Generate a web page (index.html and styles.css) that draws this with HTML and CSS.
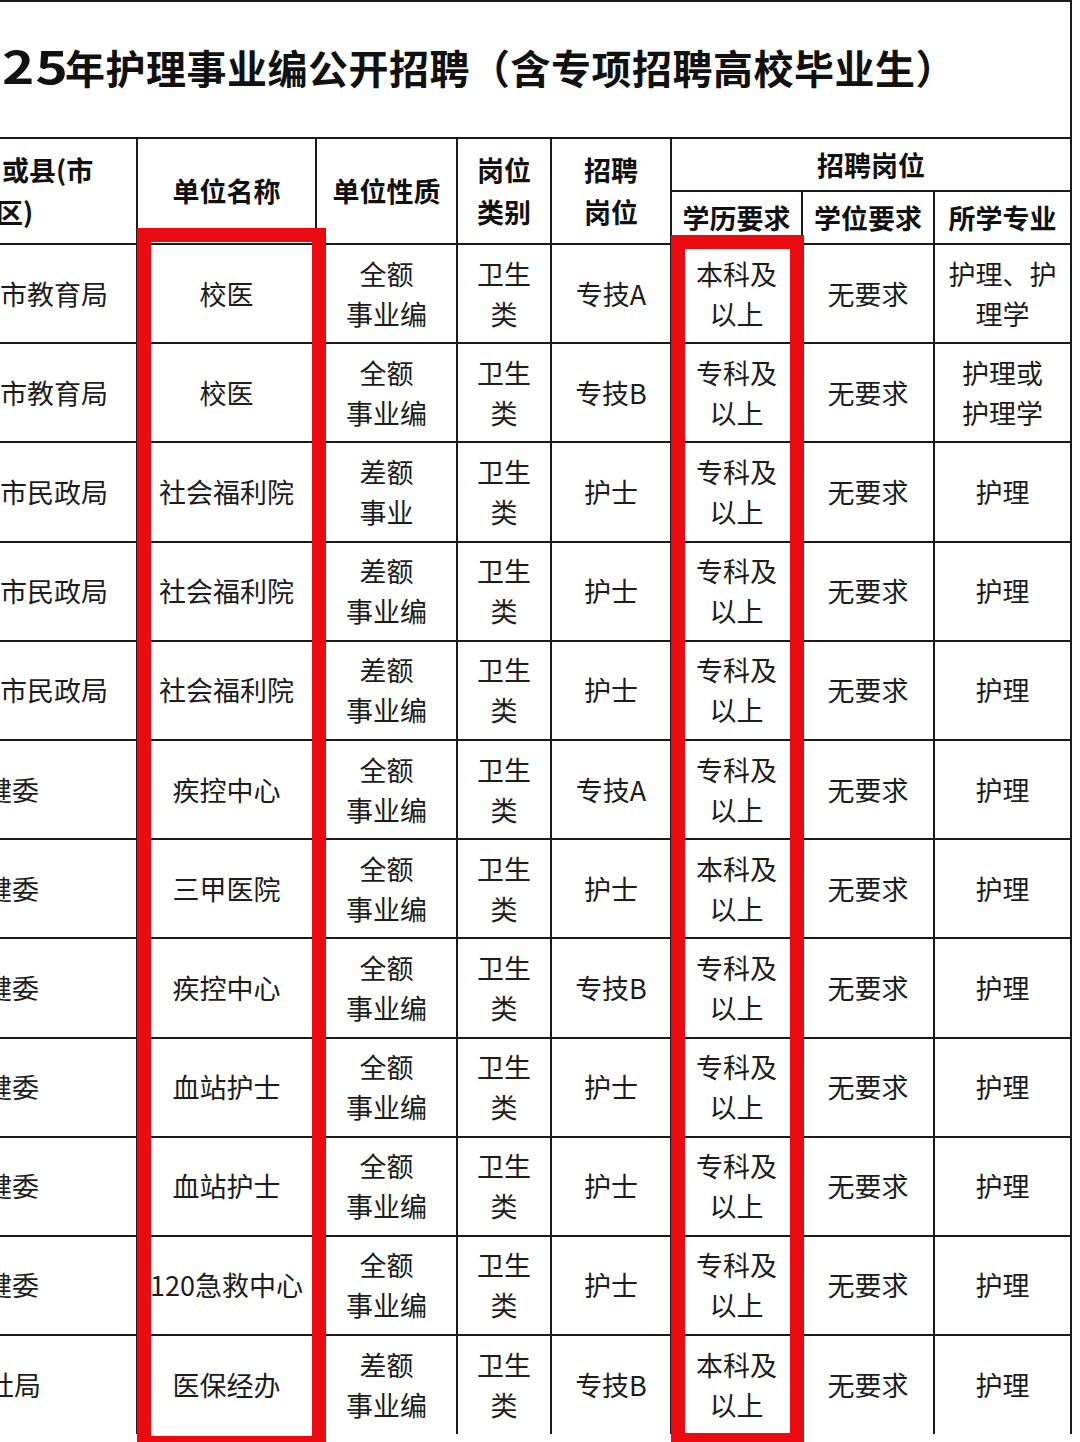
FILE: index.html
```html
<!DOCTYPE html>
<html lang="zh-CN">
<head>
<meta charset="utf-8">
<title>护理事业编公开招聘</title>
<link rel="stylesheet" href="styles.css">
</head>
<body>
<div class="page">
  <table class="sheet">
    <colgroup>
      <col class="w0"><col class="w1"><col class="w2"><col class="w3"><col class="w4"><col class="w5"><col class="w6"><col class="w7">
    </colgroup>
    <tr class="title-row">
      <td class="title" colspan="8"><span class="yr">25</span>年护理事业编公开招聘（含专项招聘高校毕业生）</td>
    </tr>
    <tr class="head-row">
      <th class="c0 h0" rowspan="2"><div class="l1">或县(市</div><div class="l2">区)</div></th>
      <th rowspan="2">单位名称</th>
      <th rowspan="2">单位性质</th>
      <th rowspan="2" class="two">岗位<br>类别</th>
      <th rowspan="2" class="two">招聘<br>岗位</th>
      <th colspan="3" class="top">招聘岗位</th>
    </tr>
    <tr class="head-row">
      <th class="sub">学历要求</th>
      <th class="sub">学位要求</th>
      <th class="sub">所学专业</th>
    </tr>
    <tr class="row">
      <td class="c0"><span>市教育局</span></td><td>校医</td><td>全额<br>事业编</td><td>卫生<br>类</td><td>专技A</td><td>本科及<br>以上</td><td>无要求</td><td>护理、护<br>理学</td>
    </tr>
    <tr class="row">
      <td class="c0"><span>市教育局</span></td><td>校医</td><td>全额<br>事业编</td><td>卫生<br>类</td><td>专技B</td><td>专科及<br>以上</td><td>无要求</td><td>护理或<br>护理学</td>
    </tr>
    <tr class="row">
      <td class="c0"><span>市民政局</span></td><td>社会福利院</td><td>差额<br>事业</td><td>卫生<br>类</td><td>护士</td><td>专科及<br>以上</td><td>无要求</td><td>护理</td>
    </tr>
    <tr class="row">
      <td class="c0"><span>市民政局</span></td><td>社会福利院</td><td>差额<br>事业编</td><td>卫生<br>类</td><td>护士</td><td>专科及<br>以上</td><td>无要求</td><td>护理</td>
    </tr>
    <tr class="row">
      <td class="c0"><span>市民政局</span></td><td>社会福利院</td><td>差额<br>事业编</td><td>卫生<br>类</td><td>护士</td><td>专科及<br>以上</td><td>无要求</td><td>护理</td>
    </tr>
    <tr class="row">
      <td class="c0"><span class="cut-wj">卫健委</span></td><td>疾控中心</td><td>全额<br>事业编</td><td>卫生<br>类</td><td>专技A</td><td>专科及<br>以上</td><td>无要求</td><td>护理</td>
    </tr>
    <tr class="row">
      <td class="c0"><span class="cut-wj">卫健委</span></td><td>三甲医院</td><td>全额<br>事业编</td><td>卫生<br>类</td><td>护士</td><td>本科及<br>以上</td><td>无要求</td><td>护理</td>
    </tr>
    <tr class="row">
      <td class="c0"><span class="cut-wj">卫健委</span></td><td>疾控中心</td><td>全额<br>事业编</td><td>卫生<br>类</td><td>专技B</td><td>专科及<br>以上</td><td>无要求</td><td>护理</td>
    </tr>
    <tr class="row">
      <td class="c0"><span class="cut-wj">卫健委</span></td><td>血站护士</td><td>全额<br>事业编</td><td>卫生<br>类</td><td>护士</td><td>专科及<br>以上</td><td>无要求</td><td>护理</td>
    </tr>
    <tr class="row">
      <td class="c0"><span class="cut-wj">卫健委</span></td><td>血站护士</td><td>全额<br>事业编</td><td>卫生<br>类</td><td>护士</td><td>专科及<br>以上</td><td>无要求</td><td>护理</td>
    </tr>
    <tr class="row">
      <td class="c0"><span class="cut-wj">卫健委</span></td><td>120急救中心</td><td>全额<br>事业编</td><td>卫生<br>类</td><td>护士</td><td>专科及<br>以上</td><td>无要求</td><td>护理</td>
    </tr>
    <tr class="row last">
      <td class="c0"><span class="cut-rs">人社局</span></td><td>医保经办</td><td>差额<br>事业编</td><td>卫生<br>类</td><td>专技B</td><td>本科及<br>以上</td><td>无要求</td><td>护理</td>
    </tr>
  </table>
  <div class="mark mark-unit"></div>
  <div class="mark mark-edu"></div>
</div>
</body>
</html>
```
FILE: styles.css
```css
html, body {
  margin: 0;
  padding: 0;
  background: #ffffff;
}
body {
  width: 1080px;
  height: 1442px;
  overflow: hidden;
  font-family: "Noto Sans CJK SC", "Noto Sans", sans-serif;
  color: #1c1c1c;
}
.page {
  position: relative;
  width: 1080px;
  height: 1442px;
}
.sheet {
  table-layout: fixed;
  border-collapse: collapse;
  width: 1071px;
}
.w0 { width: 137px; }
.w1 { width: 179px; }
.w2 { width: 141px; }
.w3 { width: 94px; }
.w4 { width: 120px; }
.w5 { width: 131px; }
.w6 { width: 132px; }
.w7 { width: 137px; }

.sheet td, .sheet th {
  border: 2px solid #1a1a1a;
  padding: 0;
  text-align: center;
  vertical-align: middle;
  font-size: 27px;
  line-height: 40px;
  white-space: nowrap;
}
.sheet th {
  font-weight: 700;
  color: #111;
}
.sheet td {
  font-weight: 400;
}
.title-row { height: 137px; }
.sheet td.title {
  border-left: none;
  text-align: left;
  font-size: 40px;
  font-weight: 700;
  color: #111;
  padding: 0 0 7px 2px;
  letter-spacing: 0.5px;
  line-height: 50px;
}
.yr {
  display: inline-block;
  width: 63px;
  font-size: 45px;
  letter-spacing: 1px;
  transform: scaleX(1.22);
  transform-origin: left center;
}
.head-row { height: 53px; }
.sheet th.two { line-height: 42px; }
.sheet th.top { line-height: 30px; }
.sheet th.sub { line-height: 30px; }

.row { height: 99.2px; }
.sheet .c0 {
  border-left: none;
  text-align: left;
  overflow: hidden;
}
.sheet th.h0 { line-height: 42px; }
.h0 .l1 { margin-left: 2px; }
.h0 .l2 { margin-left: -4px; }
.c0 span { display: inline-block; }
.c0 .cut-wj { margin-left: -42px; }
.c0 .cut-rs { margin-left: -40px; }

.row.last td { border-bottom: none; height: 95px; }

.mark {
  position: absolute;
  border: 14px solid #ea0a0f;
  box-sizing: border-box;
}
.mark-unit {
  left: 137px;
  top: 228px;
  width: 189px;
  height: 1222px;
}
.mark-edu {
  left: 671px;
  top: 235px;
  width: 133px;
  height: 1212px;
}
```
